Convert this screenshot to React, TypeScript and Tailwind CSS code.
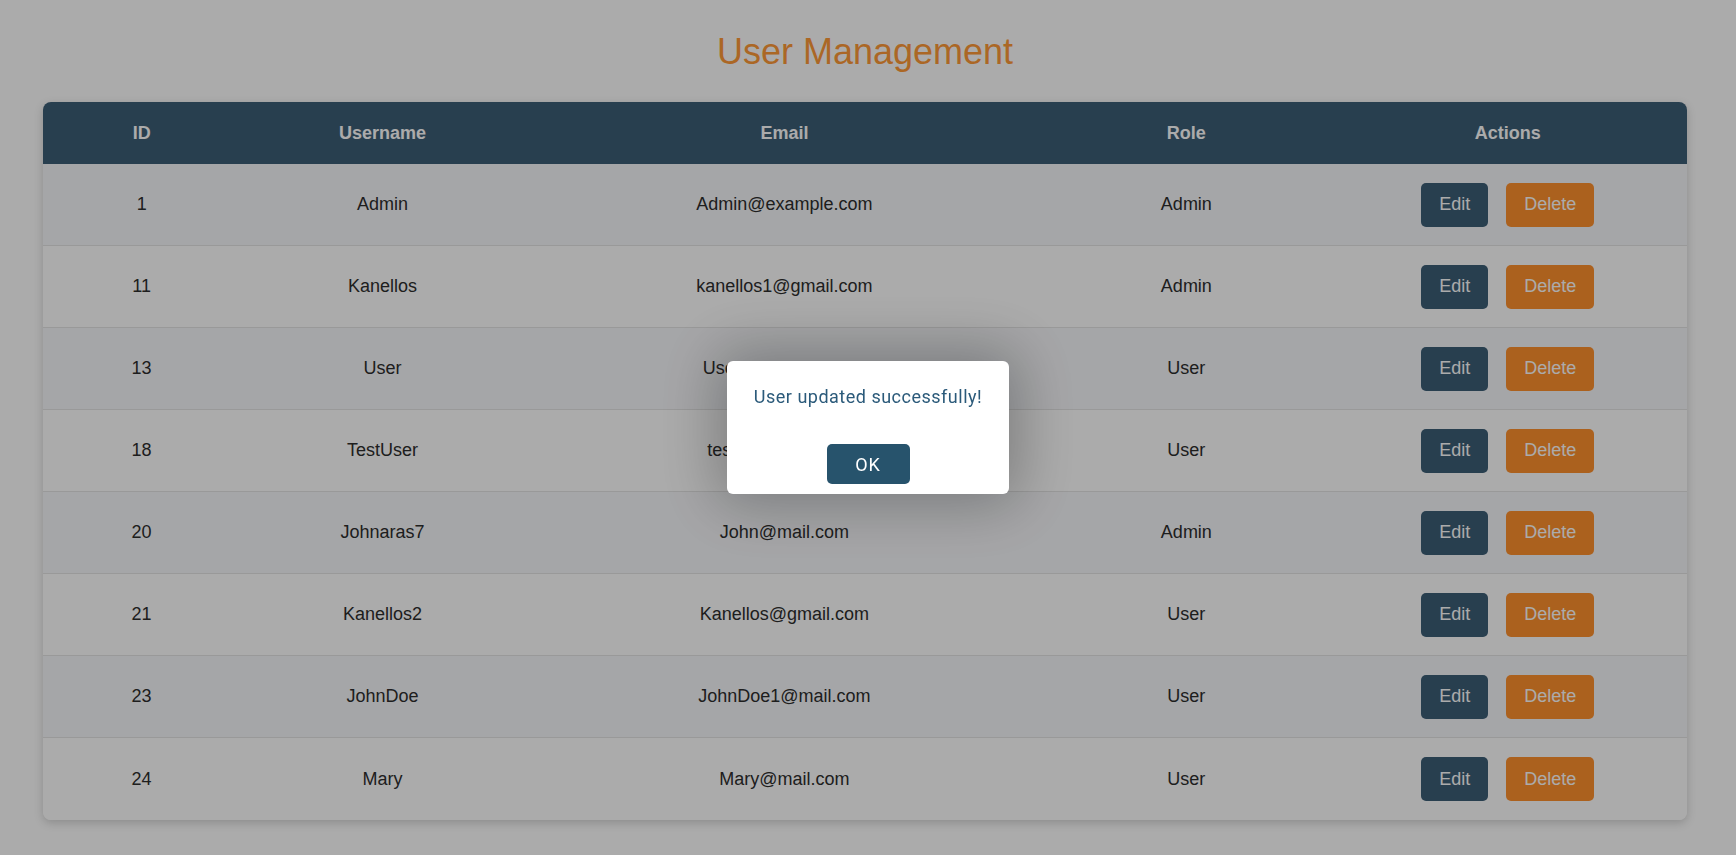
const USERS = [
  { id: 1, username: 'Admin', email: 'Admin@example.com', role: 'Admin' },
  { id: 11, username: 'Kanellos', email: 'kanellos1@gmail.com', role: 'Admin' },
  { id: 13, username: 'User', email: 'User@example.com', role: 'User' },
  { id: 18, username: 'TestUser', email: 'testuser@mail.com', role: 'User' },
  { id: 20, username: 'Johnaras7', email: 'John@mail.com', role: 'Admin' },
  { id: 21, username: 'Kanellos2', email: 'Kanellos@gmail.com', role: 'User' },
  { id: 23, username: 'JohnDoe', email: 'JohnDoe1@mail.com', role: 'User' },
  { id: 24, username: 'Mary', email: 'Mary@mail.com', role: 'User' },
];

const COLS = 'grid grid-cols-[12%_17.3%_31.6%_17.3%_1fr] items-center text-center';

function SuccessModal() {
  return (
    <div className="fixed inset-0 bg-black/[0.33] flex items-center justify-center">
      <div className="w-[282px] bg-white rounded-[6px] pt-[22px] pb-[10px] flex flex-col items-center shadow-[0_0_60px_10px_rgba(0,0,0,0.28)] font-['Roboto',sans-serif]">
        <p className="text-[#2b5a7a] text-[18px] leading-[28px] tracking-[0.5px]">User updated successfully!</p>
        <button className="mt-[33px] w-[83px] h-[40px] rounded-[5px] bg-[#27536c] text-white text-[18px] tracking-[1px]">
          OK
        </button>
      </div>
    </div>
  );
}

export default function App() {
  return (
    <div className="min-h-screen bg-white font-['Liberation_Sans',Arial,sans-serif] pt-[30px] pl-[43px] pr-[49px]">
      <h1 className="text-center text-[36px] leading-[44px] text-[#ff9a38] mb-[28px]">User Management</h1>

      <div className="rounded-[8px] overflow-hidden shadow-[0_3px_10px_rgba(0,0,0,0.18)]">
        <div className={`${COLS} h-[62px] bg-[#3c5e76] text-white font-bold text-[18px]`}>
          <div>ID</div>
          <div>Username</div>
          <div>Email</div>
          <div>Role</div>
          <div>Actions</div>
        </div>
        {USERS.map((u, i) => (
          <div
            key={u.id}
            className={`${COLS} h-[82px] text-[18px] text-[#2e2e2e] ${i % 2 === 0 ? 'bg-[#f7f8fb]' : 'bg-white'} ${i < USERS.length - 1 ? 'border-b border-[#e4e4e4]' : ''}`}
          >
            <div>{u.id}</div>
            <div>{u.username}</div>
            <div>{u.email}</div>
            <div>{u.role}</div>
            <div className="flex justify-center gap-[18px]">
              <button className="h-[44px] px-[18px] rounded-[5px] bg-[#3c5e76] text-white text-[18px]">Edit</button>
              <button className="h-[44px] px-[18px] rounded-[5px] bg-[#ff912e] text-white text-[18px]">Delete</button>
            </div>
          </div>
        ))}
      </div>

      <SuccessModal />
    </div>
  );
}
